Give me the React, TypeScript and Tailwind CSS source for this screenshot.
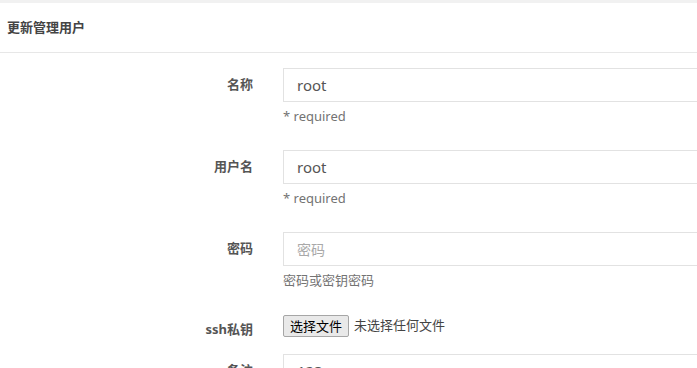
import React from "react";

const font = { fontFamily: '"Noto Sans", "Noto Sans CJK SC", sans-serif' };

function Row({
  label,
  children,
  help,
  className,
}: {
  label: string;
  children: React.ReactNode;
  help?: string;
  className?: string;
}) {
  return (
    <div className={"flex " + (className ?? "")}>
      <label className="w-[253px] shrink-0 pt-[7px] text-right text-[13px] font-bold leading-[18px] text-[#555]">
        {label}
      </label>
      <div className="ml-[30px] flex-1">
        {children}
        {help && (
          <p className="mt-[5px] text-[13px] leading-[18px] text-[#737373]">{help}</p>
        )}
      </div>
    </div>
  );
}

export default function App() {
  return (
    <div className="h-[368px] w-[697px] overflow-hidden bg-[#f1f1f1] pt-[3px]" style={font}>
      <div className="bg-white">
        <div className="flex h-[50px] items-center border-b border-[#e7e7e7] px-[7px]">
          <h3 className="text-[13px] font-bold text-[#444]">更新管理用户</h3>
        </div>

        <form className="flex flex-col pt-[15px] pb-[40px]">
          <Row label="名称" help="* required">
            <input
              defaultValue="root"
              className="h-[34px] w-[420px] border border-[#e2e2e2] px-[13px] text-[15px] text-[#555] outline-none"
            />
          </Row>

          <Row label="用户名" help="* required" className="mt-[25px]">
            <input
              defaultValue="root"
              className="h-[34px] w-[420px] border border-[#e2e2e2] px-[13px] text-[15px] text-[#555] outline-none"
            />
          </Row>

          <Row label="密码" help="密码或密钥密码" className="mt-[25px]">
            <input
              type="password"
              placeholder="密码"
              className="h-[34px] w-[420px] border border-[#e2e2e2] px-[13px] text-[14px] text-[#555] outline-none placeholder:text-[#a9a9a9]"
            />
          </Row>

          <Row label="ssh私钥" className="mt-[24px]">
            <div className="flex items-center pt-[2px]">
              <button
                type="button"
                className="h-[22px] rounded-[2px] border border-[#a6a6a6] bg-[#e9e9e9] px-[6px] text-[13px] leading-[20px] text-black"
              >
                选择文件
              </button>
              <span className="ml-[5px] text-[13px] text-[#444]">未选择任何文件</span>
            </div>
          </Row>

          <Row label="备注" className="mt-[16px]">
            <input
              defaultValue="123"
              className="h-[34px] w-[420px] border border-[#e2e2e2] px-[13px] text-[15px] text-[#555] outline-none"
            />
          </Row>
        </form>
      </div>
    </div>
  );
}
